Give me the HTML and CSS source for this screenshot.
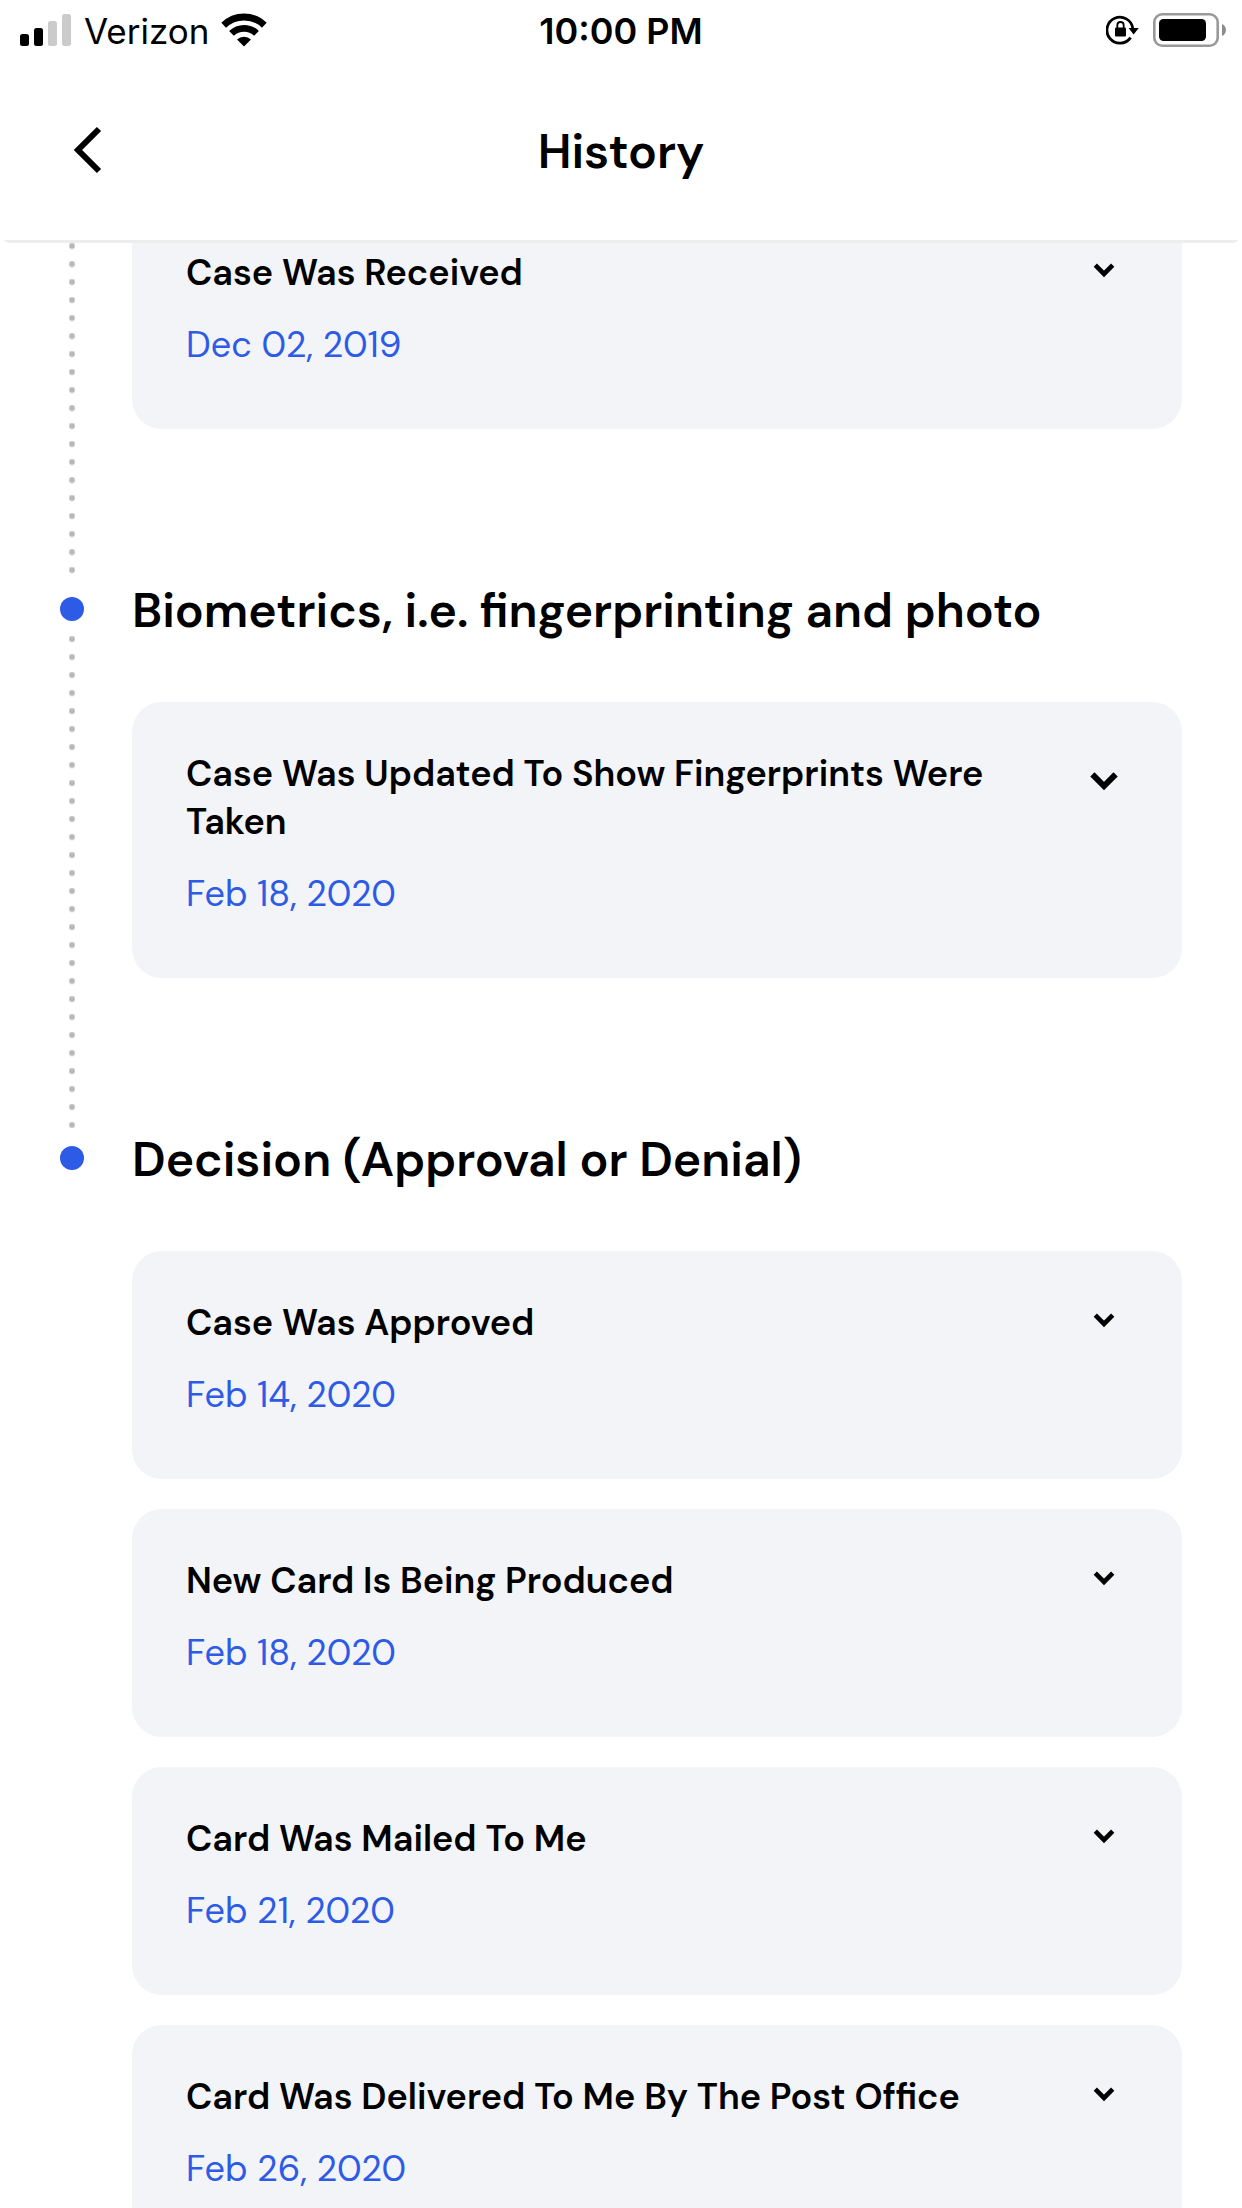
FILE: index.html
```html
<!DOCTYPE html>
<html lang="en">
<head>
<meta charset="utf-8">
<meta name="viewport" content="width=device-width, initial-scale=1">
<title>History</title>
<link rel="stylesheet" href="styles.css">
</head>
<body>
<svg class="symbols" aria-hidden="true">
  <symbol id="chevron" viewBox="0 0 44 44"><path d="M13.3 16.2 22 24.9 30.7 16.2" fill="none" stroke="#000" stroke-width="4.6"/></symbol>
  <symbol id="chevron-large" viewBox="0 0 44 62"><path d="M10.4 24.4 22 36 33.6 24.4" fill="none" stroke="#000" stroke-width="6"/></symbol>
</svg>
<header class="top">
  <div class="status">
    <div class="status-left">
      <svg width="52" height="34" viewBox="0 0 52 34" aria-hidden="true">
        <rect x="0" y="21" width="9" height="12" rx="2.5"/>
        <rect x="14" y="15" width="9" height="18" rx="2.5"/>
        <rect x="28" y="8" width="9" height="25" rx="2.5" fill="#cbcbcb"/>
        <rect x="42" y="1" width="9" height="32" rx="2.5" fill="#cbcbcb"/>
      </svg>
      <span class="carrier">Verizon</span>
      <svg width="46" height="34" viewBox="0 0 46 34" aria-hidden="true">
        <g fill="none" stroke="#000" stroke-width="6.8">
          <path d="M2.7 12.3a29 29 0 0 1 40.600 0"/>
          <path d="M10.500 20.400a18 18 0 0 1 25 0"/>
        </g>
        <path d="M23 33.4 16 26.500a10 10 0 0 1 14 0z"/>
      </svg>
    </div>
    <div class="clock">10:00 PM</div>
    <div class="status-right">
      <svg width="33" height="30" viewBox="0 0 33 30" aria-hidden="true">
        <path d="M26.8 13.5A13 13 0 1 0 24.6 22.6" fill="none" stroke="#000" stroke-width="2.8"/>
        <path d="M22.6 13h10.2l-5.2 6.6z"/>
        <rect x="9" y="12.5" width="11" height="9" rx="1.2"/>
        <path d="M11.3 13v-2.8a3.2 3.2 0 0 1 6.4 0V13" fill="none" stroke="#000" stroke-width="1.8"/>
      </svg>
      <svg width="74" height="34" viewBox="0 0 74 34" aria-hidden="true">
        <rect x="1.3" y="1.3" width="63.4" height="31.4" rx="8" fill="none" stroke="#999" stroke-width="2.6"/>
        <rect x="6" y="6" width="47" height="22" rx="4.5"/>
        <path d="M69 11c5.3 2 5.3 10 0 12z" fill="#8c8c8c"/>
      </svg>
    </div>
  </div>
  <nav class="nav">
    <button class="back" type="button" aria-label="Back">
      <svg width="30" height="48" viewBox="0 0 30 48" aria-hidden="true"><path d="M27 3 6 24l21 21" fill="none" stroke="#000" stroke-width="6"/></svg>
    </button>
    <h1 class="title">History</h1>
  </nav>
</header>
<main class="timeline">
  <section class="stage stage-scrolled">
    <div class="rail"><span class="dots"></span></div>
    <div class="stage-body">
      <article class="card">
        <div class="card-text"><h3>Case Was Received</h3><time datetime="2019-12-02">Dec 02, 2019</time></div>
        <button class="toggle" type="button" aria-label="Show details"><svg width="44" height="44"><use href="#chevron"/></svg></button>
      </article>
    </div>
  </section>
  <section class="stage">
    <div class="rail"><span class="bullet"></span><span class="dots"></span></div>
    <div class="stage-body">
      <h2>Biometrics, i.e. fingerprinting and photo</h2>
      <article class="card">
        <div class="card-text"><h3>Case Was Updated To Show Fingerprints Were Taken</h3><time datetime="2020-02-18">Feb 18, 2020</time></div>
        <button class="toggle" type="button" aria-label="Show details"><svg width="44" height="62"><use href="#chevron-large"/></svg></button>
      </article>
    </div>
  </section>
  <section class="stage">
    <div class="rail"><span class="bullet"></span></div>
    <div class="stage-body">
      <h2>Decision (Approval or Denial)</h2>
      <article class="card">
        <div class="card-text"><h3>Case Was Approved</h3><time datetime="2020-02-14">Feb 14, 2020</time></div>
        <button class="toggle" type="button" aria-label="Show details"><svg width="44" height="44"><use href="#chevron"/></svg></button>
      </article>
      <article class="card">
        <div class="card-text"><h3>New Card Is Being Produced</h3><time datetime="2020-02-18">Feb 18, 2020</time></div>
        <button class="toggle" type="button" aria-label="Show details"><svg width="44" height="44"><use href="#chevron"/></svg></button>
      </article>
      <article class="card">
        <div class="card-text"><h3>Card Was Mailed To Me</h3><time datetime="2020-02-21">Feb 21, 2020</time></div>
        <button class="toggle" type="button" aria-label="Show details"><svg width="44" height="44"><use href="#chevron"/></svg></button>
      </article>
      <article class="card">
        <div class="card-text"><h3>Card Was Delivered To Me By The Post Office</h3><time datetime="2020-02-26">Feb 26, 2020</time></div>
        <button class="toggle" type="button" aria-label="Show details"><svg width="44" height="44"><use href="#chevron"/></svg></button>
      </article>
    </div>
  </section>
</main>
</body>
</html>
```
FILE: styles.css
```css
* { box-sizing: border-box; }

body {
  margin: 0;
  height: 100vh;
  display: flex;
  flex-direction: column;
  overflow: hidden;
  background: #fff;
  color: #000;
  font-family: "DM Sans", Inter, "Liberation Sans", sans-serif;
}

h1, h2, h3 { margin: 0; font-weight: 600; }
svg { display: block; flex: none; }
button { border: 0; padding: 0; background: none; cursor: pointer; }

.symbols { position: absolute; width: 0; height: 0; }

.top { flex: none; }
.top::after {
  content: "";
  display: block;
  height: 3px;
  margin: 0 4px;
  border-radius: 0 0 6px 6px / 0 0 3px 3px;
  background: #eceeed;
}

.status {
  display: grid;
  grid-template-columns: 1fr auto 1fr;
  align-items: center;
  height: 60px;
  padding: 0 15px;
  font-family: Inter, sans-serif;
  font-size: 36px;
  line-height: 48px;
}
.status-left, .status-right { display: flex; align-items: center; }
.status-left { gap: 12px; padding-left: 5px; }
.status-right { gap: 14px; justify-content: flex-end; }
.carrier, .clock { padding-top: 2px; }
.carrier { font-size: 35px; font-weight: 400; }
.clock { font-weight: 600; }

.nav {
  display: grid;
  grid-template-columns: 1fr auto 1fr;
  align-items: center;
  height: 180px;
  padding: 0 72px;
}
.back { justify-self: start; }
.title { padding-top: 3px; font-size: 48px; line-height: 60px; }

.timeline {
  flex: 1;
  min-height: 0;
  overflow: hidden;
  padding: 0 60px;
}

.stage { display: flex; gap: 48px; }
.stage-scrolled { margin-top: -42px; }

.rail {
  flex: none;
  width: 24px;
  display: flex;
  flex-direction: column;
  align-items: center;
}
.bullet {
  width: 24px;
  height: 24px;
  margin: 18px 0 15px;
  border-radius: 50%;
  background: #2d5be6;
}
.dots {
  flex: 1;
  width: 6px;
  background: radial-gradient(circle at 3px 3px, #bbb 50%, transparent 0) 0 0 / 6px 18px;
  background: radial-gradient(circle at 3px 3px, #b8b8b8 2px, transparent 4px) 0 0 / 6px 18px;
}
.stage-scrolled .dots { margin-top: 6px; }

.stage-body {
  flex: 1;
  display: flex;
  flex-direction: column;
  gap: 30px;
  padding-bottom: 150px;
}
h2 { font-size: 48px; line-height: 63px; margin-bottom: 30px; }

.card {
  display: flex;
  align-items: flex-start;
  gap: 32px;
  padding: 48px 56px 60px 54px;
  border-radius: 30px;
  background: #f2f4f8;
}
.card-text {
  flex: 1;
  display: flex;
  flex-direction: column;
  gap: 24px;
  font-size: 36px;
  line-height: 48px;
}
h3 { font-size: inherit; }
time { color: #2d5be6; }
```
